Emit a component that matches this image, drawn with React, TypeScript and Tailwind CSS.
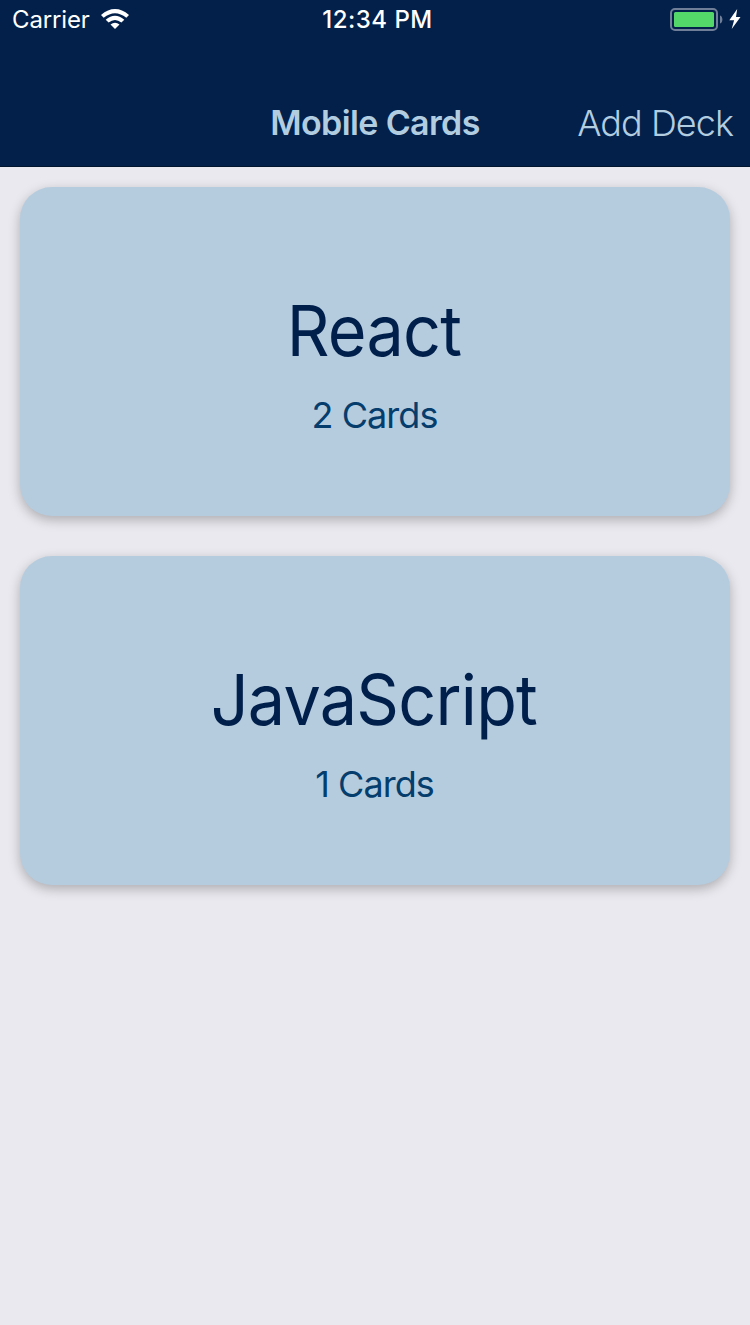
import React from "react";

function StatusBar() {
  return (
    <div className="grid h-10 grid-cols-3 items-center text-white">
      <div className="flex items-center gap-2.5 pl-3">
        <span className="text-[24px] leading-10 tracking-[-0.15px]">Carrier</span>
        <svg className="mb-0.5" width="30" height="22" viewBox="0 0 30 22">
          <path d="M1 7Q15 -4.8 29 7L26.3 9.8Q15 0.6 3.7 9.8Z" fill="white" />
          <path d="M5.7 11.7Q15 3.9 24.3 11.7L21.4 14.6Q15 9.5 8.6 14.6Z" fill="white" />
          <path d="M10.5 16.6Q15 13 19.5 16.6L15 21Z" fill="white" />
        </svg>
      </div>
      <span className="pl-[5px] text-center text-[24px] font-medium leading-10 tracking-[0.5px]">12:34 PM</span>
      <div className="flex items-center justify-end gap-1.5 pr-[9px]">
        <svg width="53" height="24" viewBox="0 0 53 24" fill="none">
          <rect x="1" y="1" width="46" height="21" rx="4" stroke="#707e98" strokeWidth="2" />
          <rect x="4" y="4" width="40" height="15" rx="1.5" fill="#53d769" />
          <path d="M50 7.5c3.2 1 3.2 7 0 8z" fill="#707e98" />
        </svg>
        <svg className="mb-0.5" width="12" height="20" viewBox="0 0 12 20">
          <path d="M8.2 0L0.3 11.2h4.8L2.7 20l8.8-12H7z" fill="white" />
        </svg>
      </div>
    </div>
  );
}

function DeckCard({ title, count }: { title: string; count: number }) {
  return (
    <section className="flex h-[329px] flex-col items-center rounded-[32px] bg-[#b5ccdf] pt-[99px] shadow-[0_4px_12px_rgba(0,0,0,0.26)]">
      <h2 className="scale-x-95 pr-[3px] text-[70px] leading-[90px] tracking-[-0.8px] text-[#011f4b]">{title}</h2>
      <p className="mt-[17px] pr-px text-[36px] leading-[44px] tracking-[-0.95px] text-[#053d6d]">{count} Cards</p>
    </section>
  );
}

export default function App() {
  return (
    <div className="flex h-[1325px] w-[750px] flex-col bg-[#e9e9ef] font-['Inter',sans-serif]">
      <header className="h-[167px] border-b border-[#01152f] bg-[#02204a]">
        <StatusBar />
        <div className="grid h-[126px] grid-cols-[1fr_auto_1fr] items-center pt-[39px] text-[#b3cde0]">
          <span />
          <h1 className="text-[34px] font-semibold tracking-[-0.62px]">Mobile Cards</h1>
          <button className="pr-[17px] text-right text-[36px] font-[350] tracking-[-0.95px]">Add Deck</button>
        </div>
      </header>
      <main className="flex flex-col gap-10 px-5 pt-5">
        <DeckCard title="React" count={2} />
        <DeckCard title="JavaScript" count={1} />
      </main>
    </div>
  );
}
